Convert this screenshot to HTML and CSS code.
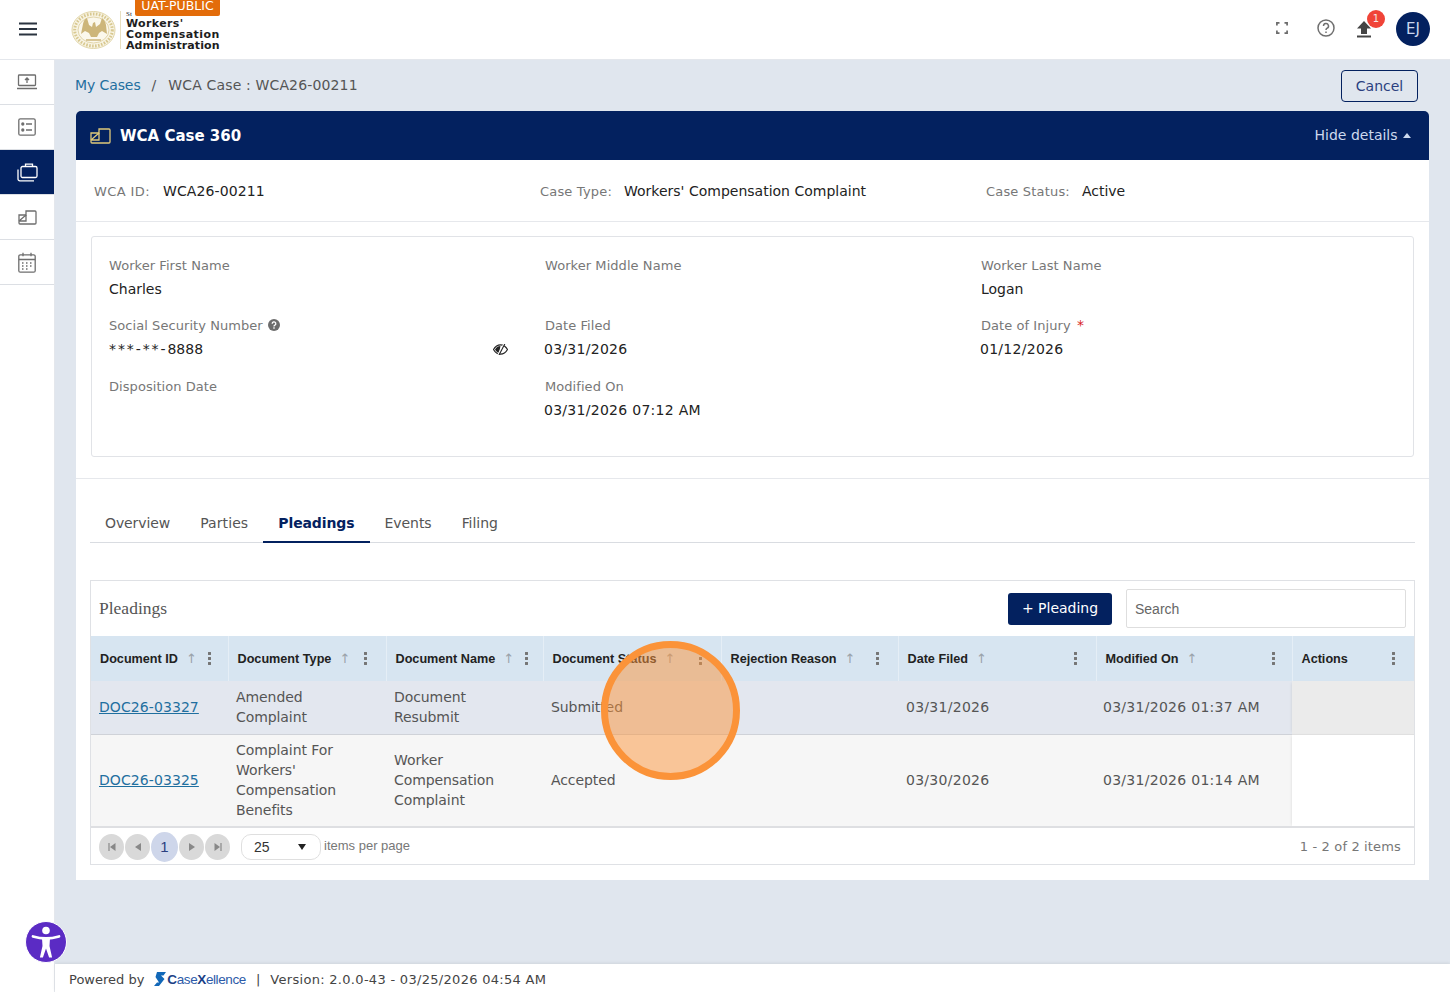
FILE: index.html
```html
<!DOCTYPE html>
<html lang="en">
<head>
<meta charset="utf-8">
<title>WCA Case 360</title>
<link rel="stylesheet" href="styles.css">
</head>
<body>
<header class="topbar">
  <button class="menu-btn" aria-label="Menu">
    <svg width="20" height="14" viewBox="0 0 20 14"><path d="M1 1.500h18M1 7h18M1 12.500h18" stroke="#2b3440" stroke-width="2"/></svg>
  </button>
  <div class="logo">
    <svg class="seal" width="46" height="40" viewBox="0 0 46 40">
      <ellipse cx="22.500" cy="20" rx="21.500" ry="18.500" fill="#f8f4e4" stroke="#e2d6a8" stroke-width="1"/>
      <ellipse cx="22.500" cy="20" rx="18.800" ry="16" fill="none" stroke="#d8c890" stroke-width="3" stroke-dasharray="1.600 1.400"/>
      <ellipse cx="22.500" cy="20" rx="15.500" ry="13" fill="#fbf8ec" stroke="#dccd9a" stroke-width=".8"/>
      <path d="M10 24 L12 14 Q13 9 16 8 L18 15 L21 17 L22 13 L24 12 L25 17 L29 14 L31 8 Q34 10 35 15 L36 24 L31 21 L28 23 L26 27 L20 27 L18 23 L14 21Z" fill="#cdb67a"/>
      <path d="M15 30h15" stroke="#cdb67a" stroke-width="1.500"/>
    </svg>
    <span class="logo-rule"></span>
    <div class="logo-text">
      <span class="logo-st">St</span>
      <span class="lt-w">Workers'</span>
      <span class="lt-c">Compensation</span>
      <span>Administration</span>
    </div>
    <span class="env-badge">UAT-PUBLIC</span>
  </div>
  <div class="top-actions">
    <svg class="ta-full" width="12" height="12" viewBox="0 0 12 12" fill="none" stroke="#6b6b6b" stroke-width="1.700"><path d="M.9 3.500V.9h2.600M8.500.9h2.600v2.600M11.100 8.500v2.600H8.500M3.500 11.100H.9V8.500"/></svg>
    <svg class="ta-help" width="18" height="18" viewBox="0 0 18 18" fill="none" stroke="#6f6f6f" stroke-width="1.500"><circle cx="9" cy="9" r="8"/><path d="M6.500 7a2.500 2.500 0 1 1 3.700 2.200c-.8.500-1.200.9-1.200 1.800"/><path d="M9 12.500v1.500"/></svg>
    <span class="ta-upload">
      <svg width="16" height="18" viewBox="0 0 16 18"><path d="M8 1 15 8.500H11V14H5V8.500H1Z" fill="#444"/><path d="M1 16.500h14" stroke="#444" stroke-width="2"/></svg>
      <span class="notif">1</span>
    </span>
    <span class="avatar">EJ</span>
  </div>
</header>

<div class="shell">
  <nav class="sidebar">
    <a class="nav-item">
      <svg width="20" height="16" viewBox="0 0 20 16" fill="none" stroke="#6e6e6e" stroke-width="1.300"><rect x="1.500" y="1" width="17" height="10.500" rx=".8"/><path d="M0 14.500h20" stroke-width="1.500"/><path d="M10 9V4M8 6l2-2 2 2"/></svg>
    </a>
    <a class="nav-item">
      <svg width="18" height="18" viewBox="0 0 18 18" fill="none" stroke="#6e6e6e" stroke-width="1.300"><rect x=".8" y=".8" width="16.400" height="16.400" rx="1.500"/><path d="M8 6h6M8 12h6"/><circle cx="4.800" cy="6" r="1" fill="#6e6e6e"/><circle cx="4.800" cy="12" r="1" fill="#6e6e6e"/></svg>
    </a>
    <a class="nav-item active">
      <svg width="21" height="19" viewBox="0 0 21 19" fill="none" stroke="#fff" stroke-width="1.300"><rect x="4" y="3.500" width="16" height="11" rx="1.500"/><path d="M8.500 3.500V1.200h7v2.300"/><path d="M1 6.500V16a1.800 1.800 0 0 0 1.800 1.800H17"/></svg>
    </a>
    <a class="nav-item">
      <svg width="19" height="15" viewBox="0 0 19 15" fill="none" stroke="#6e6e6e" stroke-width="1.300"><path d="M8 1H17a1 1 0 0 1 1 1v11a1 1 0 0 1-1 1H2a1 1 0 0 1-1-1V5H8Z"/><path d="M1 11H8V5M1 11 8 5"/></svg>
    </a>
    <a class="nav-item">
      <svg width="18" height="21" viewBox="0 0 18 21" fill="none" stroke="#6e6e6e" stroke-width="1.300"><rect x=".8" y="2.800" width="16.400" height="17.400" rx="1.500"/><path d="M.8 7.500h16.400M5 .8v3.500M13 .8v3.500"/><path d="M4 11h2M8 11h2M12 11h2M4 14h2M8 14h2M12 14h2M4 17h2M8 17h2" stroke-dasharray="1.500 .5"/></svg>
    </a>
  </nav>

  <div class="workspace">
    <main class="content">
      <div class="crumbs-row">
        <div class="crumbs">
          <a class="crumb-link">My Cases</a>
          <span class="crumb-sep">/</span>
          <span class="crumb-now">WCA Case : WCA26-00211</span>
        </div>
        <button class="btn-cancel">Cancel</button>
      </div>

      <section class="case-head">
        <div class="case-title">
          <svg width="21" height="16" viewBox="0 0 21 16" fill="none" stroke="#e0c97a" stroke-width="1.300"><path d="M9 1H19a1 1 0 0 1 1 1v12a1 1 0 0 1-1 1H2a1 1 0 0 1-1-1V5H9Z"/><path d="M1 12H9V5M1 12 9 5"/></svg>
          <strong>WCA Case 360</strong>
        </div>
        <span class="hide-details">Hide details <i class="caret-up"></i></span>
      </section>

      <section class="summary">
        <div class="sum-item sum-a"><span class="sum-label">WCA ID:</span><span class="sum-val">WCA26-00211</span></div>
        <div class="sum-item sum-b"><span class="sum-label">Case Type:</span><span class="sum-val">Workers' Compensation Complaint</span></div>
        <div class="sum-item sum-c"><span class="sum-label">Case Status:</span><span class="sum-val">Active</span></div>
      </section>

      <section class="details-wrap">
        <div class="details">
          <div class="field"><label>Worker First Name</label><div class="val">Charles</div></div>
          <div class="field"><label>Worker Middle Name</label><div class="val"></div></div>
          <div class="field"><label>Worker Last Name</label><div class="val">Logan</div></div>
          <div class="field">
            <label>Social Security Number
              <svg class="q" width="12" height="12" viewBox="0 0 12 12"><circle cx="6" cy="6" r="6" fill="#6c6c6c"/><path d="M4.200 4.700a1.800 1.800 0 1 1 2.700 1.500c-.6.300-.9.600-.9 1.200" fill="none" stroke="#fff" stroke-width="1.300"/><rect x="5.300" y="8.300" width="1.400" height="1.400" fill="#fff"/></svg>
            </label>
            <div class="val val-ssn"><span><span class="mask">***-**-</span>8888</span>
              <svg width="15" height="11" viewBox="0 0 15 11"><path d="M.5 5.500C2.500 2 5 .8 7.500.8s5 1.200 7 4.700c-2 3.500-4.500 4.700-7 4.700S2.500 9 .5 5.500Z" fill="none" stroke="#222" stroke-width="1.200"/><path d="M2 5.500C3.500 3 5 2 7.500 2L6 9C4.500 8.500 3 7.500 2 5.500Z" fill="#222"/><path d="M11 .2 5 10.800" stroke="#fff" stroke-width="1.600"/><path d="M11.800 0 6 11" stroke="#222" stroke-width="1.100"/></svg>
            </div>
          </div>
          <div class="field"><label>Date Filed</label><div class="val val-num">03/31/2026</div></div>
          <div class="field"><label>Date of Injury <span class="req">*</span></label><div class="val val-num">01/12/2026</div></div>
          <div class="field"><label>Disposition Date</label><div class="val"></div></div>
          <div class="field"><label>Modified On</label><div class="val val-num">03/31/2026 07:12 AM</div></div>
        </div>
      </section>

      <section class="tabs-panel">
        <div class="tabs">
          <a class="tab tab-first">Overview</a>
          <a class="tab tab-second">Parties</a>
          <a class="tab tab-on">Pleadings</a>
          <a class="tab">Events</a>
          <a class="tab">Filing</a>
        </div>

        <div class="grid-box">
          <div class="grid-tools">
            <h2>Pleadings</h2>
            <button class="btn-add">+ Pleading</button>
            <input class="search" type="text" placeholder="Search">
          </div>
          <table class="grid">
            <colgroup>
              <col class="c1"><col class="c2"><col class="c3"><col class="c4"><col class="c5"><col class="c6"><col class="c7"><col class="c8">
            </colgroup>
            <thead>
              <tr>
                <th><div class="th-in"><span>Document ID</span><i class="sort">↑</i><b class="kebab"></b></div></th>
                <th><div class="th-in"><span>Document Type</span><i class="sort">↑</i><b class="kebab"></b></div></th>
                <th><div class="th-in"><span>Document Name</span><i class="sort">↑</i><b class="kebab"></b></div></th>
                <th><div class="th-in"><span>Document Status</span><i class="sort">↑</i><b class="kebab"></b></div></th>
                <th><div class="th-in"><span>Rejection Reason</span><i class="sort">↑</i><b class="kebab"></b></div></th>
                <th><div class="th-in"><span>Date Filed</span><i class="sort">↑</i><b class="kebab"></b></div></th>
                <th><div class="th-in"><span>Modified On</span><i class="sort">↑</i><b class="kebab"></b></div></th>
                <th><div class="th-in"><span>Actions</span><b class="kebab"></b></div></th>
              </tr>
            </thead>
            <tbody>
              <tr class="row-sel">
                <td><a class="doc-link">DOC26-03327</a></td>
                <td class="td-type">Amended Complaint</td>
                <td>Document Resubmit</td>
                <td>Submitted</td>
                <td></td>
                <td class="td-num">03/31/2026</td>
                <td class="td-num td-mod">03/31/2026 01:37 AM</td>
                <td class="td-act"></td>
              </tr>
              <tr class="row-alt">
                <td><a class="doc-link">DOC26-03325</a></td>
                <td class="td-type">Complaint For Workers' Compensation Benefits</td>
                <td>Worker Compensation Complaint</td>
                <td>Accepted</td>
                <td></td>
                <td class="td-num">03/30/2026</td>
                <td class="td-num td-mod">03/31/2026 01:14 AM</td>
                <td class="td-act"></td>
              </tr>
            </tbody>
          </table>
          <div class="pager">
            <span class="pg"><svg width="8" height="8" viewBox="0 0 8 8"><path d="M1 0v8" stroke="#888" stroke-width="1.200"/><path d="M7.500 0v8L2 4Z" fill="#888"/></svg></span>
            <span class="pg"><svg width="6" height="8" viewBox="0 0 6 8"><path d="M6 0v8L0 4Z" fill="#888"/></svg></span>
            <span class="pg pg-on">1</span>
            <span class="pg"><svg width="6" height="8" viewBox="0 0 6 8"><path d="M0 0v8l6-4Z" fill="#888"/></svg></span>
            <span class="pg"><svg width="8" height="8" viewBox="0 0 8 8"><path d="M7 0v8" stroke="#888" stroke-width="1.200"/><path d="M.5 0v8L6 4Z" fill="#888"/></svg></span>
            <span class="page-size"><span>25</span><i class="caret-down"></i></span>
            <span class="per-page">items per page</span>
            <span class="pg-info">1 - 2 of 2 items</span>
          </div>
        </div>
      </section>
    </main>

    <footer class="footer">
      <span>Powered by</span>
      <span class="cx-logo">
        <svg width="12" height="14" viewBox="0 0 12 14"><path d="M3 0h9L9.500 3.500H7L10.500 7 5 14H0L3 10.500h2L1.500 5Z" fill="#1268b8"/></svg><b class="cx-c">C</b><b>ase</b><b class="cx-c">X</b><b>ellence</b>
      </span>
      <span class="foot-sep">|</span>
      <span class="foot-ver">Version: 2.0.0-43 - 03/25/2026 04:54 AM</span>
    </footer>
  </div>
</div>

<div class="a11y" aria-label="Accessibility">
  <svg width="30" height="33" viewBox="0 0 30 33"><circle cx="15" cy="4.500" r="3.800" fill="#fff"/><path d="M2 10.500C7 12 11 12.500 15 12.500s8-.5 13-2" stroke="#fff" stroke-width="2.800" fill="none" stroke-linecap="round"/><path d="M11 12h8l-.5 8 2.600 11.500h-3L15 22.500l-3.100 9h-3l2.600-11.500Z" fill="#fff"/></svg>
</div>
<div class="click-ring"></div>
</body>
</html>
```

FILE: styles.css
```css
* { box-sizing: border-box; }
html, body { margin: 0; height: 992px; overflow: hidden; }
body { font-family: "DejaVu Sans", sans-serif; font-size: 14px; color: #222; background: #fff; }
a { cursor: pointer; }

.topbar { height: 60px; display: flex; align-items: center; background: #fff; border-bottom: 1px solid #e4e7ec; }
.menu-btn { width: 55px; height: 57px; align-self: flex-start; border: 0; background: none; padding: 0; display: flex; align-items: center; justify-content: center; }
.logo { position: relative; display: flex; align-items: center; height: 60px; margin-left: 16px; }
.logo-rule { width: 1px; height: 38px; background: #e8dfc0; margin: 0 5px 0 3px; }
.logo-text { display: flex; flex-direction: column; font-weight: 700; font-size: 11px; line-height: 11px; color: #1d1d1d; padding-top: 3px; letter-spacing: .1px; }
.lt-w { letter-spacing: .35px; }
.lt-c { letter-spacing: .42px; }
.logo-st { height: 7px; font: 400 7px/7px "Liberation Serif", serif; }
.env-badge { position: absolute; left: 64px; top: 0; width: 85px; height: 16px; background: #e36c0a; color: #fff; font-size: 12.500px; line-height: 12px; text-align: center; border-radius: 0 0 2px 2px; }
.top-actions { margin-left: auto; display: flex; align-items: center; padding: 0 20px 2px 0; }
.ta-full { margin: 0 29px 2px 0; }
.ta-help { margin: 0 21px 2px 0; }
.ta-upload { position: relative; display: flex; margin-right: 24px; padding-top: 1px; }
.notif { position: absolute; left: 11px; top: -9px; width: 18px; height: 18px; border-radius: 50%; background: #f04438; color: #f6e6e4; font-size: 10px; line-height: 18px; text-align: center; }
.avatar { width: 34px; height: 34px; border-radius: 50%; background: #03215f; color: #c9d6ee; font-size: 15px; line-height: 35px; text-align: center; }

.shell { display: flex; height: 932px; }
.sidebar { width: 55px; flex: none; background: #fff; border-right: 1px solid #e4e7ec; }
.nav-item { display: flex; align-items: center; justify-content: center; height: 45px; border-bottom: 1px solid #dcdfe4; }
.nav-item.active { background: #03215f; }

.workspace { flex: 1; display: flex; flex-direction: column; min-width: 0; }
.content { flex: 1; background: #e0e6ee; padding: 0 21px; min-height: 0; }

.crumbs-row { height: 51px; display: flex; align-items: flex-start; justify-content: space-between; padding: 10px 11px 0 0; margin-left: -1px; }
.crumbs { display: flex; gap: 10px; color: #555; line-height: 30px; }
.crumb-link { color: #1f6f9f; letter-spacing: -.1px; }
.crumb-sep { margin-left: 1px; margin-right: 2px; }
.crumb-now { letter-spacing: .15px; }
.btn-cancel { width: 77px; height: 32px; border: 1px solid #03215f; border-radius: 4px; background: transparent; color: #2b3f80; font: 14px "DejaVu Sans", sans-serif; padding: 0; }

.case-head { height: 49px; background: #03215f; border-radius: 5px 5px 0 0; display: flex; align-items: center; justify-content: space-between; padding: 0 18px 0 14px; color: #fff; }
.case-title { display: flex; align-items: center; gap: 9px; font-size: 15px; }
.hide-details { color: #cdd9ee; font-size: 14px; padding-bottom: 2px; }
.caret-up { display: inline-block; width: 0; height: 0; margin-left: 1px; border: 4.500px solid transparent; border-top: 0; border-bottom: 5px solid #cdd9ee; vertical-align: 2px; }

.summary { height: 62px; background: #fff; border-bottom: 1px solid #e6e8ec; display: flex; align-items: center; padding: 0 0 0 18px; }
.sum-item { display: flex; align-items: baseline; }
.sum-a { width: 446px; }
.sum-b { width: 446px; }
.sum-label { color: #777; font-size: 13px; margin-right: 12px; letter-spacing: .18px; }
.sum-a .sum-label { letter-spacing: .4px; margin-right: 13px; }
.sum-a .sum-val { letter-spacing: .1px; }
.sum-val { color: #222; }

.details-wrap { height: 257px; background: #fff; padding: 14px 15px 15px; border-bottom: 1px solid #e6e8ec; }
.details { height: 221px; border: 1px solid #e1e3e7; border-radius: 3px; display: grid; grid-template-columns: repeat(3, 436px); grid-template-rows: 60px 61px 61px; padding: 21px 0 0 17px; }
.field label { display: block; height: 16px; color: #777; font-size: 13px; line-height: 16px; letter-spacing: .06px; }
.val { margin-top: 6px; line-height: 18px; min-height: 18px; color: #222; }
.val-num { margin-left: -1px; letter-spacing: .28px; }
.val-ssn { display: flex; justify-content: space-between; align-items: center; padding-right: 37px; }
.mask { letter-spacing: 1.900px; }
.q { vertical-align: -1px; margin-left: 1px; }
.req { color: #d81e1e; margin-left: 2px; font-size: 14px; line-height: 0; }

.tabs-panel { height: 401px; background: #fff; padding: 26px 14px 0; }
.tabs { height: 38px; display: flex; border-bottom: 1px solid #d9dce1; }
.tab { height: 38px; padding: 8px 15px 0; color: #555; line-height: 20px; letter-spacing: -.05px; }
.tab-first { letter-spacing: -.1px; }
.tab-second { letter-spacing: .1px; }
.tab-on { color: #03215f; font-weight: 700; letter-spacing: -.1px; border-bottom: 2px solid #03215f; }

.grid-box { margin-top: 37px; height: 285px; border: 1px solid #dfe1e5; }
.grid-tools { height: 55px; display: flex; align-items: center; padding: 0 8px; }
.grid-tools h2 { margin: 0 auto 0 0; font: 400 17.500px "Liberation Serif", serif; color: #555; }
.btn-add { width: 104px; height: 32px; background: #03215f; color: #fff; border: 0; border-radius: 3px; font: 14px/30px "DejaVu Sans", sans-serif; padding: 0 0 2px; }
.search { width: 280px; height: 39px; margin-left: 14px; border: 1px solid #dedede; border-radius: 2px; padding: 0 8px; font: 14px "Liberation Sans", sans-serif; color: #333; background: #fff; }
.search::placeholder { color: #666; opacity: 1; }

.grid { width: 1323px; border-collapse: collapse; table-layout: fixed; }
.c1 { width: 137px; } .c2 { width: 158px; } .c3 { width: 157px; } .c4 { width: 178px; }
.c5 { width: 177px; } .c6 { width: 198px; } .c7 { width: 196px; } .c8 { width: 122px; }
.grid th { height: 45px; padding: 0; background: #d7e5f1; border-right: 1px solid #e5eef6; text-align: left; }
.grid th:last-child { border-right: 0; }
.th-in { display: flex; align-items: center; padding: 0 19px 0 9px; font: 700 12.650px "Liberation Sans", sans-serif; color: #222; }
.grid th:nth-child(1) .th-in, .grid th:nth-child(7) .th-in { padding-right: 17px; }
.grid th:nth-child(3) .th-in { padding-right: 15px; }
.sort { font: 13px "DejaVu Sans", sans-serif; color: #9aa2a9; margin-left: 8px; }
.kebab { margin-left: auto; width: 3px; height: 15px; background: radial-gradient(circle at center, #757575 1.400px, transparent 1.700px) 0 0 / 3px 5px repeat-y; }
.grid td { padding: 0 8px; line-height: 20px; color: #555; letter-spacing: -.08px; border-bottom: 1px solid #cfd2d8; }
.grid .td-type { padding-right: 14px; }
.grid .td-num { letter-spacing: .28px; }
.grid .td-mod { padding-left: 7px; }
.row-sel td { height: 53px; background: #e3e7ef; }
.row-alt td { height: 93px; background: #f6f6f6; border-bottom: 2px solid #dedfe2; }
.grid .doc-link { color: #1f6f9f; text-decoration: underline; letter-spacing: .08px; }
.grid .td-act { box-shadow: -2px 0 3px -2px rgba(0,0,0,.12); }
.row-sel .td-act { background: #ebebeb; border-bottom-color: #e0e0e0; }
.row-alt .td-act { background: #fff; }

.pager { height: 37px; display: flex; align-items: center; padding: 0 13px 0 8px; gap: 1px; }
.pg { width: 25px; height: 26px; border-radius: 50%; background: #d9d9d9; display: flex; align-items: center; justify-content: center; font: 14px "Liberation Sans", sans-serif; color: #2b3f80; }
.pg-on { width: 27px; height: 30px; padding-bottom: 1px; background: #ced6ea; font-size: 15px; border-radius: 50%; }
.page-size { width: 80px; height: 26px; margin-left: 10px; border: 1px solid #dfdfdf; border-radius: 10px; display: flex; align-items: center; justify-content: space-between; padding: 1px 14px 0 12px; font: 14px "Liberation Sans", sans-serif; color: #333; }
.caret-down { width: 0; height: 0; border: 4px solid transparent; border-bottom: 0; border-top: 6px solid #222; }
.per-page { margin-left: 2px; font: 13px "Liberation Sans", sans-serif; color: #777; padding-bottom: 2px; }
.pg-info { margin-left: auto; color: #777; font-size: 13px; letter-spacing: .15px; }

.footer { height: 28px; flex: none; background: #fff; box-shadow: 0 -1px 3px rgba(0,0,0,.08); display: flex; align-items: center; padding: 2px 0 0 14px; color: #444; font-size: 13px; position: relative; }
.cx-logo { display: flex; align-items: center; margin-left: 10px; font: 13.500px "Liberation Sans", sans-serif; color: #2c5aa8; letter-spacing: -.4px; }
.cx-logo svg { margin-right: 1px; }
.cx-logo b { font-weight: 400; }
.cx-logo .cx-c { font-weight: 700; color: #1b3f86; }
.foot-sep { margin: 0 10px; }
.foot-ver { letter-spacing: .3px; }

.a11y { position: absolute; left: 25px; top: 921px; width: 42px; height: 42px; border-radius: 50%; background: #5b2bc4; border: 1px solid #fff; display: flex; align-items: center; justify-content: center; }
.click-ring { position: absolute; left: 601px; top: 641px; width: 139px; height: 139px; border-radius: 50%; border: 7px solid #fb9339; background: rgba(251, 147, 57, .5); }
```
